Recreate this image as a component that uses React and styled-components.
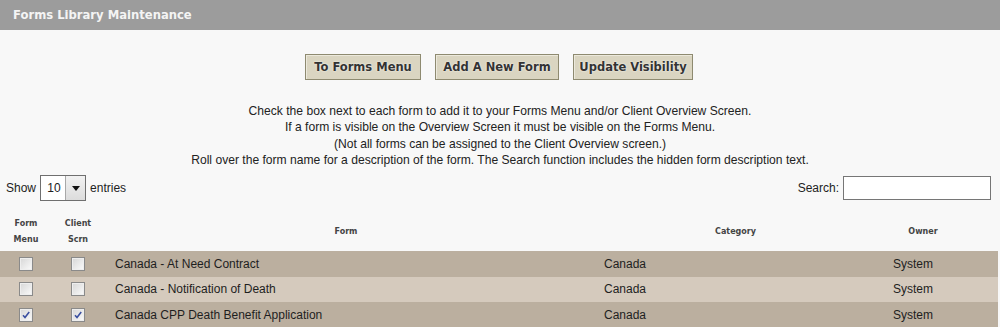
import React from 'react';
import styled, { createGlobalStyle } from 'styled-components';

const GlobalStyle = createGlobalStyle`
  html, body {
    margin: 0;
    padding: 0;
    background: #f8f8f8;
  }
  body {
    font-family: "Liberation Sans", Arial, sans-serif;
    font-size: 12px;
    color: #222;
  }
`;

const Page = styled.div`
  width: 1000px;
  height: 327px;
  overflow: hidden;
  background: #f8f8f8;
`;

const TitleBar = styled.div`
  height: 30px;
  background: #9c9c9c;
  display: flex;
  align-items: center;
  padding-left: 13px;
  color: #f4f4f4;
  font-family: "DejaVu Sans", Verdana, sans-serif;
  font-weight: bold;
  font-size: 11.6px;
`;

const ButtonRow = styled.div`
  display: flex;
  justify-content: center;
  gap: 14px;
  margin-top: 24px;
  padding-right: 2px;
`;

const Button = styled.button`
  height: 26px;
  width: ${p => p.$w}px;
  padding: 0;
  background: #dad5c1;
  border: 1px solid #8e8a70;
  border-radius: 0;
  font-family: "DejaVu Sans", Verdana, sans-serif;
  font-weight: bold;
  font-size: 11.5px;
  color: #333;
  text-shadow: 0 0 2px #fff;
  box-shadow: inset 1px 1px 0 #ece9dc;
`;

const Instructions = styled.div`
  margin-top: 23px;
  text-align: center;
  font-size: 12.1px;
  line-height: 16.3px;
  color: #222;
`;

const Controls = styled.div`
  display: flex;
  justify-content: space-between;
  align-items: center;
  margin-top: 7px;
  padding: 0 9px 0 6px;
  height: 26px;
`;

const ControlGroup = styled.label`
  display: flex;
  align-items: center;
  gap: 4px;
  color: #222;
`;

const Select = styled.div`
  display: flex;
  width: 46px;
  height: 26px;
  box-sizing: border-box;
  border: 1px solid #6f6f6f;
  background: #fff;
`;

const SelectValue = styled.span`
  flex: 1;
  display: flex;
  align-items: center;
  justify-content: center;
  padding-left: 2px;
`;

const SelectArrow = styled.span`
  width: 19px;
  display: flex;
  align-items: center;
  justify-content: center;
  background: linear-gradient(#f2f2f2, #dcdcdc);
  border-left: 1px solid #a8a8a8;

  &::after {
    content: '';
    border-left: 4px solid transparent;
    border-right: 4px solid transparent;
    border-top: 5px solid #111;
  }
`;

const SearchInput = styled.input`
  width: 148px;
  height: 24px;
  box-sizing: border-box;
  border: 1px solid #767676;
  background: #fff;
  margin: 0;
  padding: 2px 4px;
  font-size: 12px;
`;

const Grid = styled.div`
  display: grid;
  grid-template-columns: 52px 52px 489px 289px 1fr;
  width: 998px;
  margin-top: 10px;
`;

const HeadCell = styled.div`
  height: 40px;
  display: flex;
  flex-direction: column;
  align-items: center;
  justify-content: center;
  padding-top: 1px;
  box-sizing: border-box;
  padding-right: ${p => p.$shift || 0}px;
  font-family: "DejaVu Sans", Verdana, sans-serif;
  font-weight: bold;
  font-size: 8px;
  line-height: 16px;
  color: #444;
`;

const Cell = styled.div`
  height: 25.5px;
  display: flex;
  align-items: center;
  justify-content: ${p => (p.$center ? 'center' : 'flex-start')};
  padding-left: ${p => (p.$center ? 0 : 11)}px;
  background: ${p => (p.$odd ? '#d5cabd' : '#bbaf9f')};
  color: #1e1e1e;
  font-size: 12px;
`;

const Box = styled.span`
  width: 14px;
  height: 14px;
  box-sizing: border-box;
  border: 1px solid #8a8a8a;
  background: linear-gradient(135deg, #d6d6d6, #fbfbfb);
  box-shadow: inset 0 0 0 1px #eeeeee;
  display: flex;
  align-items: center;
  justify-content: center;
`;

const Checkbox = ({ checked }) => (
  <Box>
    {checked && (
      <svg width="10" height="10" viewBox="0 0 10 10">
        <path d="M2 5.3 L4 7.5 L8.2 2" fill="none" stroke="#3a4fa0" strokeWidth="1.6" />
      </svg>
    )}
  </Box>
);

const rows = [
  { name: 'Canada - At Need Contract', category: 'Canada', owner: 'System', menu: false, scrn: false },
  { name: 'Canada - Notification of Death', category: 'Canada', owner: 'System', menu: false, scrn: false },
  { name: 'Canada CPP Death Benefit Application', category: 'Canada', owner: 'System', menu: true, scrn: true },
];

export default function App() {
  return (
    <Page>
      <GlobalStyle />
      <TitleBar>Forms Library Maintenance</TitleBar>
      <ButtonRow>
        <Button $w={116}>To Forms Menu</Button>
        <Button $w={124}>Add A New Form</Button>
        <Button $w={120}>Update Visibility</Button>
      </ButtonRow>
      <Instructions>
        <div>Check the box next to each form to add it to your Forms Menu and/or Client Overview Screen.</div>
        <div>If a form is visible on the Overview Screen it must be visible on the Forms Menu.</div>
        <div>(Not all forms can be assigned to the Client Overview screen.)</div>
        <div>Roll over the form name for a description of the form. The Search function includes the hidden form description text.</div>
      </Instructions>
      <Controls>
        <ControlGroup>
          Show
          <Select>
            <SelectValue>10</SelectValue>
            <SelectArrow />
          </Select>
          entries
        </ControlGroup>
        <ControlGroup>
          Search:
          <SearchInput type="text" />
        </ControlGroup>
      </Controls>
      <Grid>
        <HeadCell><span>Form</span><span>Menu</span></HeadCell>
        <HeadCell><span>Client</span><span>Scrn</span></HeadCell>
        <HeadCell $shift={5}>Form</HeadCell>
        <HeadCell $shift={4}>Category</HeadCell>
        <HeadCell $shift={34}>Owner</HeadCell>
        {rows.map((r, i) => (
          <React.Fragment key={r.name}>
            <Cell $center $odd={i % 2 === 1}><Checkbox checked={r.menu} /></Cell>
            <Cell $center $odd={i % 2 === 1}><Checkbox checked={r.scrn} /></Cell>
            <Cell $odd={i % 2 === 1}>{r.name}</Cell>
            <Cell $odd={i % 2 === 1}>{r.category}</Cell>
            <Cell $odd={i % 2 === 1}>{r.owner}</Cell>
          </React.Fragment>
        ))}
      </Grid>
    </Page>
  );
}
